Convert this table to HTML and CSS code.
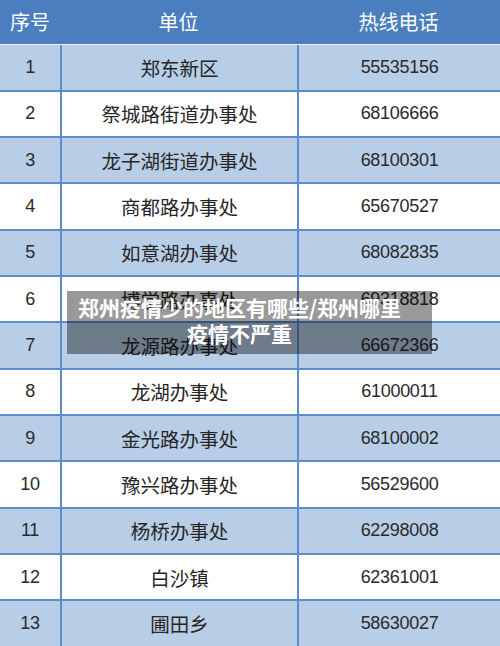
FILE: index.html
```html
<!DOCTYPE html>
<html lang="zh">
<head>
<meta charset="utf-8">
<link rel="stylesheet" href="styles.css">
</head>
<body>
<div class="page">
  <div class="table">
    <div class="row head"><div class="cell">序号</div><div class="cell">单位</div><div class="cell">热线电话</div></div>
    <div class="row first alt"><div class="cell num">1</div><div class="cell">郑东新区</div><div class="cell num">55535156</div></div>
    <div class="row"><div class="cell num">2</div><div class="cell">祭城路街道办事处</div><div class="cell num">68106666</div></div>
    <div class="row alt"><div class="cell num">3</div><div class="cell">龙子湖街道办事处</div><div class="cell num">68100301</div></div>
    <div class="row"><div class="cell num">4</div><div class="cell">商都路办事处</div><div class="cell num">65670527</div></div>
    <div class="row alt"><div class="cell num">5</div><div class="cell">如意湖办事处</div><div class="cell num">68082835</div></div>
    <div class="row"><div class="cell num">6</div><div class="cell">博学路办事处</div><div class="cell num">69318818</div></div>
    <div class="row alt"><div class="cell num">7</div><div class="cell">龙源路办事处</div><div class="cell num">66672366</div></div>
    <div class="row"><div class="cell num">8</div><div class="cell">龙湖办事处</div><div class="cell num">61000011</div></div>
    <div class="row alt"><div class="cell num">9</div><div class="cell">金光路办事处</div><div class="cell num">68100002</div></div>
    <div class="row"><div class="cell num">10</div><div class="cell">豫兴路办事处</div><div class="cell num">56529600</div></div>
    <div class="row alt"><div class="cell num">11</div><div class="cell">杨桥办事处</div><div class="cell num">62298008</div></div>
    <div class="row"><div class="cell num">12</div><div class="cell">白沙镇</div><div class="cell num">62361001</div></div>
    <div class="row alt"><div class="cell num">13</div><div class="cell">圃田乡</div><div class="cell num">58630027</div></div>
  </div>
  <div class="caption">郑州疫情少的地区有哪些/郑州哪里疫情不严重</div>
</div>
</body>
</html>
```
FILE: styles.css
```css
html, body {
  margin: 0;
  padding: 0;
  background: #ffffff;
  overflow: hidden;
}
.page {
  position: relative;
  width: 500px;
  height: 646px;
  overflow: hidden;
  font-family: "Noto Sans CJK SC", "Liberation Sans", sans-serif;
}
.table {
  display: flex;
  flex-direction: column;
}
.row {
  display: grid;
  grid-template-columns: 60px 237px 203px;
  height: 46.35px;
  box-sizing: border-box;
  border-top: 2px solid #5d8dcb;
  background: #ffffff;
}
.row.alt {
  background: #b8cde6;
}
.row.head {
  height: 44.5px;
  border-top: 0;
  border-bottom: 1.5px solid #eef3fa;
  background: #4a7ebf;
}
.row.first {
  height: 45px;
  border-top: 0;
}
.cell {
  display: flex;
  align-items: center;
  justify-content: center;
  font-size: 19.5px;
  color: #262626;
  box-sizing: border-box;
}
.row:not(.head) .cell + .cell {
  border-left: 2px solid #5d8dcb;
}
.head .cell {
  color: #ffffff;
  font-size: 20px;
  padding-bottom: 1px;
}
.num {
  font-family: "Liberation Sans", "Noto Sans CJK SC", sans-serif;
  font-size: 18px;
  letter-spacing: -0.3px;
  color: #2a2a2a;
}
.caption {
  position: absolute;
  left: 67px;
  top: 291px;
  width: 365px;
  height: 63px;
  box-sizing: border-box;
  padding: 3px 22px 0 2px;
  background: rgba(0, 0, 0, 0.4);
  color: #ffffff;
  font-weight: bold;
  font-size: 21px;
  line-height: 26px;
  text-align: center;
}
```
